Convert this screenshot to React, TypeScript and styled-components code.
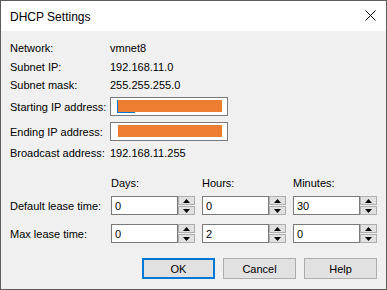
import * as React from "react";
import styled, { createGlobalStyle } from "styled-components";

const GlobalStyle = createGlobalStyle`
    html, body {
        margin: 0;
        padding: 0;
        background: #f0f0f0;
    }
    body {
        font-family: "Liberation Sans", Arial, sans-serif;
        font-size: 11px;
        color: #000;
    }
`;

const infoRows = [
    { label: "Network:", value: "vmnet8", h: 18 },
    { label: "Subnet IP:", value: "192.168.11.0", h: 19 },
    { label: "Subnet mask:", value: "255.255.255.0", h: 18 },
];

const leaseRows = [
    { label: "Default lease time:", values: ["0", "0", "30"], top: 7 },
    { label: "Max lease time:", values: ["0", "2", "0"], top: 9 },
];

const Arrow: React.FC<{ up?: boolean }> = ({ up }) => (
    <svg width="7" height="4" viewBox="0 0 7 4">
        {up
            ? <polygon points="0,4 7,4 3.5,0" fill="#000" />
            : <polygon points="0,0 7,0 3.5,4" fill="#000" />}
    </svg>
);

const SpinField: React.FC<{ value: string }> = ({ value }) => (
    <SpinGroup>
        <SpinInput>{value}</SpinInput>
        <SpinButtons>
            <SpinButton><Arrow up /></SpinButton>
            <SpinButton><Arrow /></SpinButton>
        </SpinButtons>
    </SpinGroup>
);

export default function App() {
    return (
        <>
            <GlobalStyle />
            <Window>
                <TitleBar>
                    <Title>DHCP Settings</Title>
                    <CloseButton>
                        <svg width="11" height="11" viewBox="0 0 11 11">
                            <path d="M0.5 0.5 L10.5 10.5 M10.5 0.5 L0.5 10.5" stroke="#000" strokeWidth="1" />
                        </svg>
                    </CloseButton>
                </TitleBar>
                <Body>
                    {infoRows.map(r => (
                        <InfoRow key={r.label} $h={r.h}>
                            <span>{r.label}</span>
                            <span>{r.value}</span>
                        </InfoRow>
                    ))}
                    <InfoRow $h={19} $top={3}>
                        <span>Starting IP address:</span>
                        <AddressBox>
                            <Caret />
                            <Redaction />
                        </AddressBox>
                    </InfoRow>
                    <InfoRow $h={19} $top={6}>
                        <span>Ending IP address:</span>
                        <AddressBox>
                            <Redaction />
                        </AddressBox>
                    </InfoRow>
                    <InfoRow $h={18} $top={3}>
                        <span>Broadcast address:</span>
                        <span>192.168.11.255</span>
                    </InfoRow>

                    <LeaseRow $h={13} $top={14}>
                        <span />
                        <span>Days:</span>
                        <span>Hours:</span>
                        <span>Minutes:</span>
                    </LeaseRow>
                    {leaseRows.map(r => (
                        <LeaseRow key={r.label} $h={19} $top={r.top}>
                            <span>{r.label}</span>
                            {r.values.map((v, i) => <SpinField key={i} value={v} />)}
                        </LeaseRow>
                    ))}

                    <ButtonRow>
                        <DialogButton $primary>OK</DialogButton>
                        <DialogButton>Cancel</DialogButton>
                        <DialogButton>Help</DialogButton>
                    </ButtonRow>
                </Body>
            </Window>
        </>
    );
}

const Window = styled.div`
    width: 387px;
    height: 290px;
    box-sizing: border-box;
    border: 1px solid #5c5c5c;
    background: #f0f0f0;
    display: flex;
    flex-direction: column;
    overflow: hidden;
`;

const TitleBar = styled.div`
    height: 30px;
    flex-shrink: 0;
    background: #fff;
    display: flex;
    align-items: center;
    justify-content: space-between;
    padding: 0 10px 0 9px;
`;

const Title = styled.div`
    font-size: 12px;
    color: #000;
    margin-top: 1px;
`;

const CloseButton = styled.div`
    width: 11px;
    height: 11px;
    display: flex;
    margin-top: -1px;
`;

const Body = styled.div`
    flex: 1;
    padding: 8px 9px 0 9px;
    display: flex;
    flex-direction: column;
`;

const InfoRow = styled.div<{ $h: number; $top?: number }>`
    display: grid;
    grid-template-columns: 100px 1fr;
    align-items: center;
    height: ${p => p.$h}px;
    margin-top: ${p => p.$top || 0}px;
`;

const AddressBox = styled.div`
    position: relative;
    width: 118px;
    height: 19px;
    box-sizing: border-box;
    border: 1px solid #7a7a7a;
    background: #fff;
`;

const Caret = styled.span`
    position: absolute;
    left: 6px;
    top: 2px;
    width: 18px;
    height: 13px;
    background: #0078d7;
`;

const Redaction = styled.span`
    position: absolute;
    left: 7px;
    right: 5px;
    top: 2px;
    height: 12px;
    background: #ed7d31;
`;

const LeaseRow = styled.div<{ $h: number; $top: number }>`
    display: grid;
    grid-template-columns: 94px repeat(3, 84px);
    column-gap: 7px;
    align-items: center;
    height: ${p => p.$h}px;
    margin-top: ${p => p.$top}px;
    white-space: nowrap;
`;

const SpinGroup = styled.div`
    display: flex;
    height: 19px;
`;

const SpinInput = styled.div`
    width: 67px;
    box-sizing: border-box;
    border: 1px solid #7a7a7a;
    background: #fff;
    padding-left: 3px;
    display: flex;
    align-items: center;
`;

const SpinButtons = styled.div`
    width: 17px;
    display: flex;
    flex-direction: column;
    gap: 1px;
`;

const SpinButton = styled.div`
    flex: 1;
    box-sizing: border-box;
    border: 1px solid #adadad;
    background: #e1e1e1;
    display: flex;
    align-items: center;
    justify-content: center;
`;

const ButtonRow = styled.div`
    display: flex;
    justify-content: flex-end;
    gap: 8px;
    margin-top: 15px;
`;

const DialogButton = styled.div<{ $primary?: boolean }>`
    width: 73px;
    height: 21px;
    box-sizing: border-box;
    border: ${p => (p.$primary ? "2px solid #0078d7" : "1px solid #adadad")};
    background: #e1e1e1;
    display: flex;
    align-items: center;
    justify-content: center;
    font-size: 11px;
`;
